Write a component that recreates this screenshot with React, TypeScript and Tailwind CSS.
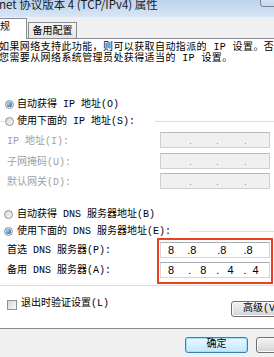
import { ReactNode } from 'react'

// Win7 style "TCP/IPv4 properties" dialog, cropped

const uiFont = "font-['Liberation_Mono','Noto_Sans_CJK_SC',monospace] text-[10px]"

function Radio({ checked }: { checked?: boolean }) {
  return (
    <span className="flex h-[9px] w-[9px] shrink-0 items-center justify-center rounded-full border border-[#8e9298] bg-linear-to-br from-[#d4d6d9] to-[#fbfbfb]">
      {checked && (
        <span className="h-[5px] w-[5px] rounded-full bg-[radial-gradient(circle_at_35%_35%,#a6dcf8,#1d62b0_75%)]" />
      )}
    </span>
  )
}

function IpField({ disabled, children }: { disabled?: boolean; children?: ReactNode }) {
  if (disabled) {
    return (
      <div className="relative flex h-[16px] w-[110px] items-end border border-[#d0d0d0] border-t-[#b9b9b9] bg-[#f0f0f0] pb-[3px]">
        <span className="ml-[29px] h-px w-px bg-[#9a9a9a]" />
        <span className="ml-[26px] h-px w-px bg-[#9a9a9a]" />
        <span className="ml-[27px] h-px w-px bg-[#9a9a9a]" />
      </div>
    )
  }
  return (
    <div className="flex h-[16px] w-[110px] items-center border border-[#d2d5da] border-t-[#a9acb1] bg-white font-['Liberation_Sans',sans-serif] text-[11px] leading-[12px] text-black">
      {children}
    </div>
  )
}

function FieldRow({ label, h, children }: { label: string; h: string; children: ReactNode }) {
  return (
    <div className={`flex ${h}`}>
      <div className="w-[160px] pl-[7px] pt-[4px] leading-[12px] text-[#a0a0a0]">{label}</div>
      {children}
    </div>
  )
}

function DnsRow({ label, h, children }: { label: string; h: string; children: ReactNode }) {
  return (
    <div className={`flex ${h}`}>
      <div className="w-[160px] pl-[7px] pt-[3px] leading-[12px] text-black">{label}</div>
      {children}
    </div>
  )
}

function Button({ primary, className, children }: { primary?: boolean; className?: string; children?: ReactNode }) {
  const look = primary
    ? 'border-[#3c7fb1] bg-linear-to-b from-[#eaf6fd] via-[#d9f0fc] to-[#bee6fd] shadow-[inset_0_0_0_1px_#9fe2fa]'
    : 'border-[#707070] bg-linear-to-b from-[#f2f2f2] via-[#e6e6e6] to-[#d2d2d2] shadow-[inset_0_0_0_1px_#fcfcfc]'
  return (
    <div className={`flex h-[16px] shrink-0 items-center whitespace-nowrap rounded-[3px] border leading-[12px] ${look} ${className ?? ''}`}>
      {children}
    </div>
  )
}

export default function App() {
  return (
    <div className={`relative h-[357px] w-[274px] overflow-hidden bg-[#f0f0f0] text-black ${uiFont}`}>
      {/* title bar */}
      <div className="relative h-[17px] overflow-hidden bg-linear-to-b from-[#bcd3ec] to-[#d8e6f5]">
        <div className="-ml-[1px] -mt-[3px] whitespace-nowrap font-['Noto_Sans_CJK_SC',sans-serif] text-[11.5px] leading-[14px] text-[#1b1b1b]">
          net 协议版本 4 (TCP/IPv4) 属性
        </div>
        <div className="absolute right-[-4px] top-[-7px] h-[14px] w-[18px] rounded-[3px] border border-[#72849c] bg-linear-to-b from-[#e3ecf6] to-[#c6d8ec]" />
      </div>

      {/* tabs */}
      <div className="flex h-[21px] items-end">
        <div className="relative z-10 -mb-px -ml-px h-[21px] w-[28px] border-r border-t border-[#898c95] bg-white pl-[1px] pt-[3px] leading-[12px]">
          规
        </div>
        <div className="ml-px flex h-[16px] w-[49px] justify-center border-x border-t border-[#898c95] bg-linear-to-b from-[#f6f6f6] to-[#e4e4e4] pt-[3px] leading-[12px]">
          备用配置
        </div>
      </div>

      {/* tab page */}
      <div className="flex h-[291px] flex-col border-y border-[#898c95] bg-white">
        <div className="-ml-px whitespace-nowrap pt-[3px] leading-[11px] tracking-[0.4px]">
          <div>如果网络支持此功能，则可以获取自动指派的 IP 设置。否则</div>
          <div>您需要从网络系统管理员处获得适当的 IP 设置。</div>
        </div>

        <div className="mt-[32px] flex h-[17px] items-center pl-[5px]">
          <Radio checked />
          <span className="ml-[3px] leading-[12px]">自动获得 IP 地址(O)</span>
        </div>
        <div className="flex h-[17px] items-center">
          <span className="h-px w-[4px] bg-[#d5dfe5]" />
          <span className="ml-px">
            <Radio />
          </span>
          <span className="ml-[3px] leading-[12px]">使用下面的 IP 地址(S):</span>
          <span className="ml-auto h-px w-[119px] bg-[#d5dfe5]" />
        </div>

        <div className="mt-[2px]">
          <FieldRow label="IP 地址(I):" h="h-[21px]">
            <IpField disabled />
          </FieldRow>
          <FieldRow label="子网掩码(U):" h="h-[20px]">
            <IpField disabled />
          </FieldRow>
          <FieldRow label="默认网关(D):" h="h-[17px]">
            <IpField disabled />
          </FieldRow>
        </div>

        <div className="mt-[16px] flex h-[17px] items-center pl-[4px]">
          <Radio />
          <span className="ml-[4px] leading-[12px]">自动获得 DNS 服务器地址(B)</span>
        </div>
        <div className="flex h-[17px] items-center pl-[4px]">
          <Radio checked />
          <span className="ml-[4px] leading-[12px]">使用下面的 DNS 服务器地址(E):</span>
          <span className="ml-auto h-px w-[84px] bg-[#d5dfe5]" />
        </div>

        <div className="mt-[2px]">
          <DnsRow label="首选 DNS 服务器(P):" h="h-[20px]">
            <IpField>
              <span className="ml-[7px]">8</span>
              <span className="ml-[13px]">.8</span>
              <span className="ml-[21px]">.8</span>
              <span className="ml-[17px]">.8</span>
            </IpField>
          </DnsRow>
          <DnsRow label="备用 DNS 服务器(A):" h="h-[16px]">
            <IpField>
              <span className="ml-[7px]">8</span>
              <span className="ml-[14px]">.</span>
              <span className="ml-[9px]">8</span>
              <span className="ml-[10px]">.</span>
              <span className="ml-[8px]">4</span>
              <span className="ml-[10px]">.</span>
              <span className="ml-[6px]">4</span>
            </IpField>
          </DnsRow>
        </div>

        <div className="mt-[7px] h-px bg-[#d5dfe5]" />

        <div className="mt-[14px] flex items-start">
          <span className="ml-[7px] h-[10px] w-[10px] shrink-0 border border-[#8e9298] bg-linear-to-br from-[#d6d8db] to-[#f9f9f9]" />
          <span className="-mt-[2px] ml-[4px] leading-[12px]">退出时验证设置(L)</span>
          <Button className="-mr-[3px] ml-auto mt-px w-[46px] pl-[11px]">高级(V)</Button>
        </div>
      </div>

      {/* footer buttons */}
      <div className="mt-[8px] flex">
        <Button primary className="ml-[185px] w-[63px] justify-center">
          确定
        </Button>
        <Button className="ml-[8px] w-[30px]" />
      </div>

      {/* red highlight drawn around the DNS inputs */}
      <div className="pointer-events-none absolute left-[157px] top-[238px] h-[46px] w-[116px] border-2 border-[#e8431d]" />
    </div>
  )
}
